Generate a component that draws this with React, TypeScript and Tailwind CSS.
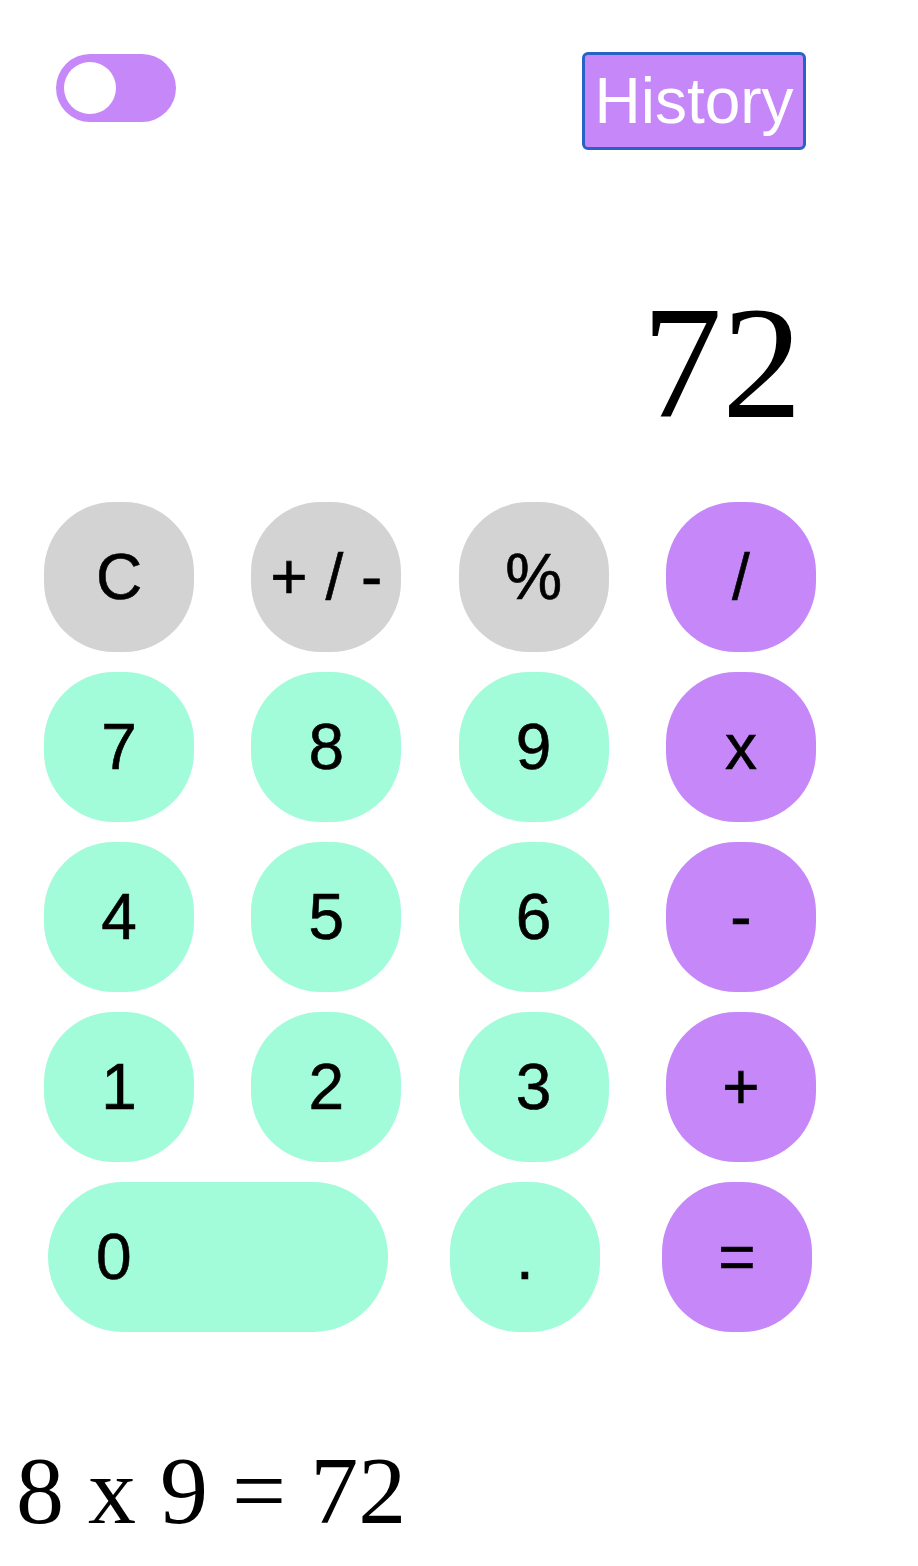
import React, { useState } from 'react';

type Key = { label: string; kind: 'grey' | 'green' | 'purple' };

const rows: Key[][] = [
  [
    { label: 'C', kind: 'grey' },
    { label: '+ / -', kind: 'grey' },
    { label: '%', kind: 'grey' },
    { label: '/', kind: 'purple' },
  ],
  [
    { label: '7', kind: 'green' },
    { label: '8', kind: 'green' },
    { label: '9', kind: 'green' },
    { label: 'x', kind: 'purple' },
  ],
  [
    { label: '4', kind: 'green' },
    { label: '5', kind: 'green' },
    { label: '6', kind: 'green' },
    { label: '-', kind: 'purple' },
  ],
  [
    { label: '1', kind: 'green' },
    { label: '2', kind: 'green' },
    { label: '3', kind: 'green' },
    { label: '+', kind: 'purple' },
  ],
];

const colors = {
  grey: 'bg-[#d3d3d3]',
  green: 'bg-[#a2fbd9]',
  purple: 'bg-[#c688f8]',
};

const sans = { fontFamily: '"Liberation Sans", Arial, sans-serif' };
const serif = { fontFamily: '"Liberation Serif", "Times New Roman", serif' };

const KeyButton = ({ k }: { k: Key }) => (
  <button
    className={`w-[150px] h-[150px] rounded-[70px] text-[64px] leading-none text-black [-webkit-text-stroke:0.6px_black] flex items-center justify-center ${colors[k.kind]}`}
    style={sans}
  >
    {k.label}
  </button>
);

const App = () => {
  const [dark, setDark] = useState(false);

  return (
    <div className="w-[918px] min-h-[1566px] bg-white">
      {/* top bar */}
      <div className="flex items-start justify-between pt-[52px] pl-[56px] pr-[112px]">
        <button
          onClick={() => setDark(!dark)}
          className="mt-[2px] w-[120px] h-[68px] rounded-full bg-[#c688f8] flex items-center pl-[8px]"
        >
          <span className="block w-[52px] h-[52px] rounded-full bg-white" />
        </button>
        <button
          className="w-[224px] h-[98px] rounded-[6px] border-[3px] border-[#2862c7] bg-[#c688f8] text-white text-[64px] leading-none flex items-center justify-center"
          style={sans}
        >
          History
        </button>
      </div>

      {/* display */}
      <div className="mt-[133px] pr-[116px] text-right text-[160px] leading-none text-black h-[160px]" style={serif}>
        72
      </div>

      {/* keypad */}
      <div className="mt-[59px] flex flex-col gap-[20px]">
        {rows.map((row, i) => (
          <div key={i} className="flex justify-between pl-[44px] pr-[102px]">
            {row.map((k) => (
              <KeyButton key={k.label} k={k} />
            ))}
          </div>
        ))}
        <div className="flex pl-[48px] gap-[62px]">
          <button
            className="w-[340px] h-[150px] rounded-[75px] bg-[#a2fbd9] text-[64px] leading-none text-black [-webkit-text-stroke:0.6px_black] flex items-center pl-[48px]"
            style={sans}
          >
            0
          </button>
          <KeyButton k={{ label: '.', kind: 'green' }} />
          <KeyButton k={{ label: '=', kind: 'purple' }} />
        </div>
      </div>

      {/* history line */}
      <div className="mt-[111px] pl-[16px] text-[96px] leading-none text-black" style={serif}>
        8 x 9 = 72
      </div>
    </div>
  );
};

export default App;
